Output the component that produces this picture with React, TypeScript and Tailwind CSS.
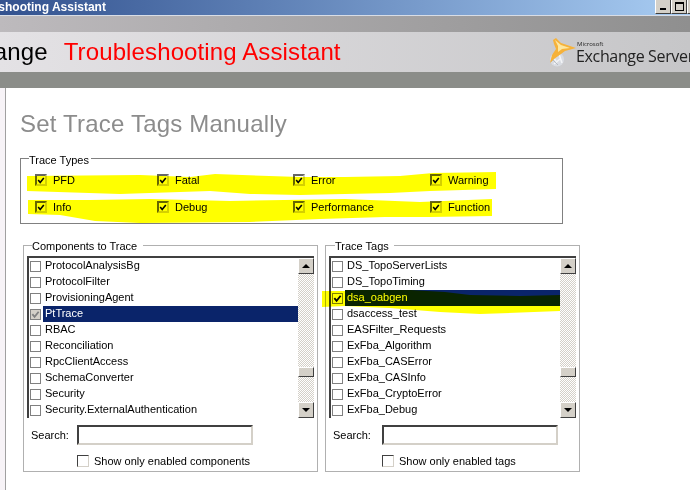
const components = ["ProtocolAnalysisBg", "ProtocolFilter", "ProvisioningAgent", "PtTrace", "RBAC", "Reconciliation", "RpcClientAccess", "SchemaConverter", "Security", "Security.ExternalAuthentication"];
const tags = ["DS_TopoServerLists", "DS_TopoTiming", "dsa_oabgen", "dsaccess_test", "EASFilter_Requests", "ExFba_Algorithm", "ExFba_CASError", "ExFba_CASInfo", "ExFba_CryptoError", "ExFba_Debug"];
const traceTypes = ["PFD", "Fatal", "Error", "Warning", "Info", "Debug", "Performance", "Function"];

function Check({ color = "#000" }: { color?: string }) {
  return (
    <svg viewBox="0 0 10 10" className="w-[9px] h-[9px]">
      <path d="M1.5 4.5 L4 7.5 L8.5 2" fill="none" stroke={color} strokeWidth="2" />
    </svg>
  );
}

function Box({ checked, dim }: { checked?: boolean; dim?: boolean }) {
  return (
    <span className={`w-[11px] h-[11px] shrink-0 flex items-center justify-center border border-[#808080] ${checked && dim ? "bg-[#d4d0c8]" : "bg-white"}`}>
      {checked && <Check color={dim ? "#808080" : "#000"} />}
    </span>
  );
}

function TypeBox() {
  return (
    <span className="w-3 h-3 shrink-0 flex items-center justify-center bg-white border-2 border-t-[#666666] border-l-[#666666] border-b-[#d4d0c8] border-r-[#d4d0c8]">
      <Check />
    </span>
  );
}

function ScrollButton({ up }: { up?: boolean }) {
  return (
    <div className="h-4 w-4 shrink-0 flex items-center justify-center bg-[#d4d0c8] border border-t-white border-l-white border-b-[#404040] border-r-[#404040]">
      <span className={`w-0 h-0 border-x-[4px] border-x-transparent ${up ? "border-b-[4px] border-b-black" : "border-t-[4px] border-t-black"}`} />
    </div>
  );
}

function ListBox({ items, selected, checked, dim, width }: { items: string[]; selected: string; checked: string; dim?: boolean; width: string }) {
  return (
    <div className={`flex h-[162px] border-t-2 border-l-2 border-t-[#404040] border-l-[#404040] bg-white ${width}`}>
      <div className="flex-1 min-w-0">
        {items.map((item) => (
          <div key={item} className="h-4 flex items-center pl-px">
            <Box checked={item === checked} dim={dim} />
            <span className={`ml-[2px] flex-1 h-4 pl-[2px] leading-[15px] ${item === selected ? "bg-[#0a246a] text-white" : ""}`}>{item}</span>
          </div>
        ))}
      </div>
      <div className="w-4 flex flex-col bg-[repeating-conic-gradient(#d4d0c8_0_25%,#ffffff_0_50%)] bg-[length:2px_2px]">
        <ScrollButton up />
        <div className="h-[10px] mt-[93px] bg-[#d4d0c8] border border-t-white border-l-white border-b-[#404040] border-r-[#404040]" />
        <div className="flex-1" />
        <ScrollButton />
      </div>
    </div>
  );
}

export default function App() {
  return (
    <div className="relative w-[690px] h-[490px] overflow-hidden bg-white font-['Liberation_Sans',sans-serif] text-[11px] text-black">
      {/* title bar */}
      <div className="h-[15px] flex items-center justify-between bg-gradient-to-r from-[#33528f] to-[#a9cdf3] overflow-hidden border-b border-[#d8dde6] box-content">
        <div className="font-bold text-[12px] text-white whitespace-nowrap -ml-[45px] leading-[15px]">Troubleshooting Assistant</div>
        <div className="flex -mt-[3px] -mr-[13px] items-start">
          {[0, 1, 2].map((i) => (
            <div key={i} className="w-4 h-[15px] bg-[#d4d0c8] border border-t-white border-l-white border-b-[#404040] border-r-[#404040] flex items-center justify-center">
              {i === 0 && <span className="w-[6px] h-[2px] bg-black mt-[6px]" />}
              {i === 1 && <span className="w-[9px] h-[9px] border border-black border-t-2" />}
            </div>
          ))}
        </div>
      </div>
      <div className="h-4 bg-gradient-to-r from-[#bdbabd] to-[#8f8f8f]" />
      {/* header band */}
      <div className="h-10 flex items-center justify-between overflow-hidden bg-gradient-to-r from-[#e4e2e5] to-[#c6c6c8]">
        <div className="flex gap-[16px] text-[24px] tracking-[0.12px] whitespace-nowrap -ml-[60px]">
          <span>Exchange</span>
          <span className="text-[#ff0000]">Troubleshooting Assistant</span>
        </div>
        <div className="flex items-center shrink-0 w-[142px]">
          <svg viewBox="0 0 28 30" className="w-7 h-[30px] shrink-0">
            <circle cx="9" cy="22.5" r="7" fill="#d9dce2" />
            <path d="M4 19 L8 24 M6 27 L12 22 M11 17 L14 26" stroke="#f4f5f7" strokeWidth="1.5" fill="none" />
            <path d="M4 22 L10 28 M3 25 L7 20" stroke="#aeb2ba" strokeWidth="0.8" fill="none" />
            <path d="M5 3 L8 1 L13 6 L28 11 L17 14 L13 17 L6 22 L2 26 L4 18 L8 12 L6 7 Z" fill="#f6b23a" />
            <path d="M7 3 L13 8 L22 11 L14 12 L10 15 L10 9 Z" fill="#fde7a0" />
          </svg>
          <div className="flex flex-col font-['Open_Sans',sans-serif] text-[#222222]">
            <span className="text-[6px] leading-[7px] pl-[1px]">Microsoft</span>
            <span className="text-[16px] leading-[16px] tracking-[-0.35px] whitespace-nowrap">Exchange Server</span>
          </div>
        </div>
      </div>
      <div className="h-4 bg-[#8b8d89]" />

      <div className="flex h-[402px]">
        <div className="w-[6px] shrink-0 bg-[#f7f3f7] border-r border-[#a0a0a0]" />
        <div className="flex-1 min-w-0">
          <h1 className="mt-[22px] ml-[14px] text-[24px] tracking-[0.2px] leading-7 text-[#8c8c8c]">Set Trace Tags Manually</h1>

          <fieldset className="mt-[12px] ml-[14px] w-[543px] h-[74px] border border-[#808080] pl-[14px]">
            <legend className="-ml-[6px] pt-[4px] pr-[2px] leading-[13px]">Trace Types</legend>
            <div className="grid grid-cols-[122px_136px_137px_1fr] gap-y-[15px] mt-[7px]">
              {traceTypes.map((t) => (
                <div key={t} className="flex items-center gap-[6px] h-3">
                  <TypeBox />
                  <span>{t}</span>
                </div>
              ))}
            </div>
          </fieldset>

          <div className="flex gap-[7px] ml-[17px] mt-[14px]">
            <fieldset className="w-[295px] h-[234px] border border-[#b0b0b0] pl-[3px]">
              <legend className="ml-[5px] pt-[2px] pr-[6px] leading-[13px]">Components to Trace</legend>
              <div className="mt-[3px]">
                <ListBox items={components} selected="PtTrace" checked="PtTrace" dim width="w-[287px]" />
              </div>
              <div className="flex items-center mt-[7px] pl-[4px]">
                <span className="w-[46px] pt-px">Search:</span>
                <div className="w-[176px] h-5 border-2 border-t-[#404040] border-l-[#404040] border-b-[#d4d0c8] border-r-[#d4d0c8]" />
              </div>
              <div className="flex items-center gap-[5px] mt-2 pl-[50px]">
                <span className="w-3 h-3 border border-t-[#404040] border-l-[#404040] border-b-[#d4d0c8] border-r-[#d4d0c8]" />
                <span>Show only enabled components</span>
              </div>
            </fieldset>

            <fieldset className="w-[255px] h-[234px] border border-[#b0b0b0] pl-[3px]">
              <legend className="ml-[6px] pt-[2px] pr-[5px] leading-[13px]">Trace Tags</legend>
              <div className="mt-[3px]">
                <ListBox items={tags} selected="dsa_oabgen" checked="dsa_oabgen" width="w-[247px]" />
              </div>
              <div className="flex items-center mt-[7px] pl-[4px]">
                <span className="w-[49px] pt-px">Search:</span>
                <div className="w-[176px] h-5 border-2 border-t-[#404040] border-l-[#404040] border-b-[#d4d0c8] border-r-[#d4d0c8]" />
              </div>
              <div className="flex items-center gap-[5px] mt-2 pl-[53px]">
                <span className="w-3 h-3 border border-t-[#404040] border-l-[#404040] border-b-[#d4d0c8] border-r-[#d4d0c8]" />
                <span>Show only enabled tags</span>
              </div>
            </fieldset>
          </div>
        </div>
      </div>

      {/* yellow marker strokes drawn over the screenshot */}
      <svg viewBox="0 0 690 490" className="absolute inset-0 w-[690px] h-[490px] mix-blend-multiply pointer-events-none">
        <path fill="#ffff00" d="M27 176 L140 175 L190 177 L215 174 L300 177 L345 177 L400 176 L433 173 L496 172 L496 189 L430 191 L390 193 L300 195 L250 194 L210 191 L120 194 L27 191 Z" />
        <path fill="#ffff00" d="M28 200 L90 200 L150 199 L230 201 L345 199 L420 202 L492 199 L492 216 L430 217 L385 217 L320 219 L250 222 L140 223 L95 221 L60 215 L28 214 Z" />
        <path fill="#ffff00" d="M322 291 L345 291 L345 290 L410 290 L445 292 L470 295 L520 296 L560 295 L560 311 L480 314 L440 312 L390 308 L345 306 L322 307 Z" />
      </svg>
    </div>
  );
}
